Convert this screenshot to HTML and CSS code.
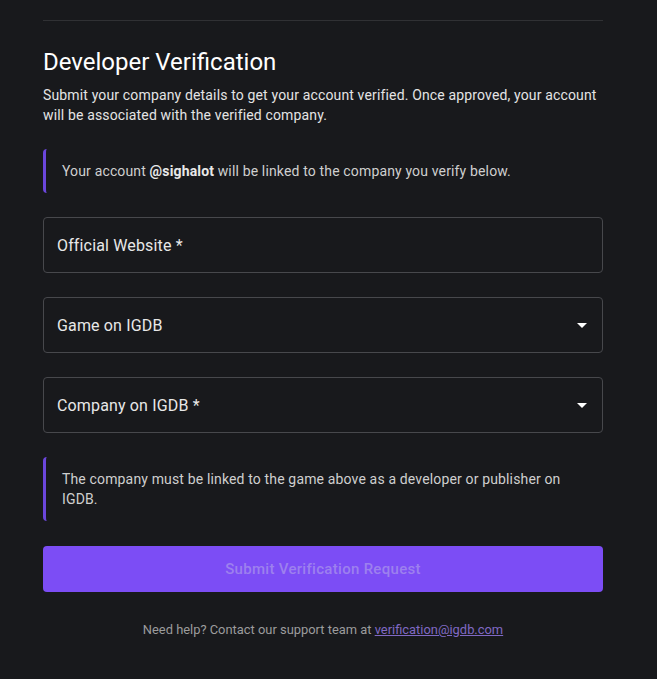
FILE: index.html
```html
<!DOCTYPE html>
<html lang="en">
<head>
  <meta charset="UTF-8">
  <title>Developer Verification</title>
  <link rel="stylesheet" href="styles.css">
</head>
<body>

  <div class="container">
    <hr class="divider">

    <h2 class="title">Developer Verification</h2>
    <p class="intro">Submit your company details to get your account verified. Once approved, your account will be associated with the verified company.</p>

    <div class="note">Your account <strong>@sighalot</strong> will be linked to the company you verify below.</div>

    <div class="field">
      <span class="label">Official Website *</span>
    </div>

    <div class="field select">
      <span class="label">Game on IGDB</span>
      <svg class="arrow" width="10" height="5" viewBox="0 0 10 5"><path d="M0 0h10L5 5z" fill="#fff"/></svg>
    </div>

    <div class="field select">
      <span class="label">Company on IGDB *</span>
      <svg class="arrow" width="10" height="5" viewBox="0 0 10 5"><path d="M0 0h10L5 5z" fill="#fff"/></svg>
    </div>

    <div class="note">The company must be linked to the game above as a developer or publisher on IGDB.</div>

    <button class="submit" disabled>Submit Verification Request</button>

    <p class="help">Need help? Contact our support team at <a href="#">verification@igdb.com</a></p>
  </div>

</body>
</html>
```

FILE: styles.css
```css
body {
  margin: 0;
  background: #18191c;
  font-family: Roboto, 'Liberation Sans', sans-serif;
  color: #e6e6e6;
}

.container {
  width: 560px;
  margin-left: 43px;
  padding-top: 20px;
  display: flex;
  flex-direction: column;
}

.divider {
  margin: 0;
  border: none;
  border-top: 1px solid #303134;
}

.title {
  margin: 25px 0 0;
  font-size: 24px;
  font-weight: 400;
  line-height: 32px;
  color: #fff;
}

.intro {
  margin: 7px 0 0;
  font-size: 14px;
  line-height: 20px;
  letter-spacing: 0.15px;
  color: #e4e4e4;
}

.note {
  margin-top: 24px;
  padding: 12px 16px;
  border-left: 3px solid #6b46dc;
  border-radius: 4px;
  font-size: 14px;
  line-height: 20px;
  letter-spacing: 0.15px;
  color: #cfcfcf;
}

.note strong {
  color: #e8e8e8;
}

.field {
  margin-top: 24px;
  height: 56px;
  box-sizing: border-box;
  padding: 0 15px 0 13px;
  border: 1px solid #47484c;
  border-radius: 4px;
  display: flex;
  align-items: center;
  justify-content: space-between;
}

.label {
  font-size: 16px;
  letter-spacing: 0.15px;
  color: #e8e8e8;
}

.submit {
  margin-top: 25px;
  height: 46px;
  border: none;
  border-radius: 4px;
  background: #7c4df5;
  color: #9d80ee;
  font-family: inherit;
  font-size: 15px;
  font-weight: 500;
  letter-spacing: 0.3px;
}

.help {
  margin: 28px 0 0;
  text-align: center;
  font-size: 12.9px;
  line-height: 20px;
  color: #9c9c9c;
}

.help a {
  color: #8069c4;
}
```
